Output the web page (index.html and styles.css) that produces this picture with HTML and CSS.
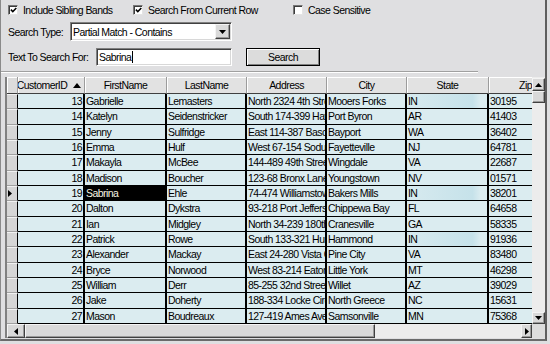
FILE: index.html
```html
<!DOCTYPE html>
<html>
<head>
<meta charset="utf-8">
<link rel="stylesheet" href="styles.css">
</head>
<body>
<div class="window">
  <div class="opts">
    <label class="chk w1"><span class="box"><svg width="8" height="8" viewBox="0 0 8 8"><path d="M1 3.6 L3.2 5.8 L7.2 1.6" fill="none" stroke="#000" stroke-width="1.7"/></svg></span>Include Sibling Bands</label>
    <label class="chk w2"><span class="box"><svg width="8" height="8" viewBox="0 0 8 8"><path d="M1 3.6 L3.2 5.8 L7.2 1.6" fill="none" stroke="#000" stroke-width="1.7"/></svg></span>Search From Current Row</label>
    <label class="chk"><span class="box"></span>Case Sensitive</label>
  </div>
  <div class="line r2">
    <span class="lbl lbl-type">Search Type:</span>
    <div class="combo"><span class="ctext">Partial Match - Contains</span><span class="ddbtn"><svg width="7" height="4" viewBox="0 0 7 4"><path d="M0 0 H7 L3.5 4 Z" fill="#000"/></svg></span></div>
  </div>
  <div class="line r3">
    <span class="lbl lbl-text">Text To Search For:</span>
    <div class="input"><span>Sabrina</span><span class="caret"></span></div>
    <button class="btn">Search</button>
  </div>
  <div class="sep"></div>
  <div class="grid">
    <div class="gtop">
      <div class="table">
        <div class="row hrow">
          <div class="hc sel"></div>
          <div class="hc idh"><span>CustomerID</span><svg class="sort" width="8" height="5" viewBox="0 0 8 5"><path d="M4 0 L8 5 H0 Z" fill="#000"/></svg></div>
          <div class="hc">FirstName</div>
          <div class="hc">LastName</div>
          <div class="hc">Address</div>
          <div class="hc">City</div>
          <div class="hc">State</div>
          <div class="hc">Zip</div>
        </div>
        <div class="row"><div class="s"></div><div class="c num">13</div><div class="c">Gabrielle</div><div class="c">Lemasters</div><div class="c">North 2324 4th Street</div><div class="c">Mooers Forks</div><div class="c hl">IN</div><div class="c">30195</div></div>
        <div class="row"><div class="s"></div><div class="c num">14</div><div class="c">Katelyn</div><div class="c">Seidenstricker</div><div class="c">South 174-399 Hayes Ave</div><div class="c">Port Byron</div><div class="c">AR</div><div class="c">41403</div></div>
        <div class="row"><div class="s"></div><div class="c num">15</div><div class="c">Jenny</div><div class="c">Sulfridge</div><div class="c">East 114-387 Bascom St</div><div class="c">Bayport</div><div class="c">WA</div><div class="c">36402</div></div>
        <div class="row"><div class="s"></div><div class="c num">16</div><div class="c">Emma</div><div class="c">Hulf</div><div class="c">West 67-154 Sodus Rd</div><div class="c">Fayetteville</div><div class="c">NJ</div><div class="c">64781</div></div>
        <div class="row"><div class="s"></div><div class="c num">17</div><div class="c">Makayla</div><div class="c">McBee</div><div class="c">144-489 49th Street</div><div class="c">Wingdale</div><div class="c">VA</div><div class="c">22687</div></div>
        <div class="row"><div class="s"></div><div class="c num">18</div><div class="c">Madison</div><div class="c">Boucher</div><div class="c">123-68 Bronx Lane</div><div class="c">Youngstown</div><div class="c">NV</div><div class="c">01571</div></div>
        <div class="row"><div class="s"><svg width="4" height="7" viewBox="0 0 4 7"><path d="M0 0 L4 3.5 L0 7 Z" fill="#000"/></svg></div><div class="c num">19</div><div class="c cur">Sabrina</div><div class="c">Ehle</div><div class="c">74-474 Williamstown Rd</div><div class="c">Bakers Mills</div><div class="c hl">IN</div><div class="c">38201</div></div>
        <div class="row"><div class="s"></div><div class="c num">20</div><div class="c">Dalton</div><div class="c">Dykstra</div><div class="c">93-218 Port Jefferson Rd</div><div class="c">Chippewa Bay</div><div class="c">FL</div><div class="c">64658</div></div>
        <div class="row"><div class="s"></div><div class="c num">21</div><div class="c">Ian</div><div class="c">Midgley</div><div class="c">North 34-239 180th St</div><div class="c">Cranesville</div><div class="c">GA</div><div class="c">58335</div></div>
        <div class="row"><div class="s"></div><div class="c num">22</div><div class="c">Patrick</div><div class="c">Rowe</div><div class="c">South 133-321 Hunt Ave</div><div class="c">Hammond</div><div class="c hl">IN</div><div class="c">91936</div></div>
        <div class="row"><div class="s"></div><div class="c num">23</div><div class="c">Alexander</div><div class="c">Mackay</div><div class="c">East 24-280 Vista Court</div><div class="c">Pine City</div><div class="c">VA</div><div class="c">83480</div></div>
        <div class="row"><div class="s"></div><div class="c num">24</div><div class="c">Bryce</div><div class="c">Norwood</div><div class="c">West 83-214 Eaton St</div><div class="c">Little York</div><div class="c">MT</div><div class="c">46298</div></div>
        <div class="row"><div class="s"></div><div class="c num">25</div><div class="c">William</div><div class="c">Derr</div><div class="c">85-255 32nd Street</div><div class="c">Willet</div><div class="c">AZ</div><div class="c">39029</div></div>
        <div class="row"><div class="s"></div><div class="c num">26</div><div class="c">Jake</div><div class="c">Doherty</div><div class="c">188-334 Locke Circle</div><div class="c">North Greece</div><div class="c">NC</div><div class="c">15631</div></div>
        <div class="row"><div class="s"></div><div class="c num">27</div><div class="c">Mason</div><div class="c">Boudreaux</div><div class="c">127-419 Ames Ave</div><div class="c">Samsonville</div><div class="c">MN</div><div class="c">75368</div></div>
      </div>
      <div class="vscroll">
        <div class="sb vup"><svg width="7" height="4" viewBox="0 0 7 4"><path d="M3.5 0 L7 4 H0 Z" fill="#000"/></svg></div>
        <div class="sb vthumb"></div>
        <div class="track"></div>
        <div class="sb vdown"><svg width="7" height="4" viewBox="0 0 7 4"><path d="M0 0 H7 L3.5 4 Z" fill="#000"/></svg></div>
      </div>
    </div>
    <div class="gbot">
      <div class="hscroll">
        <div class="sb hleft"><svg width="4" height="7" viewBox="0 0 4 7"><path d="M4 0 V7 L0 3.5 Z" fill="#000"/></svg></div>
        <div class="sb hthumb"></div>
        <div class="track"></div>
        <div class="sb hright"><svg width="4" height="7" viewBox="0 0 4 7"><path d="M0 0 L4 3.5 L0 7 Z" fill="#000"/></svg></div>
      </div>
      <div class="corner"></div>
    </div>
  </div>
</div>
</body>
</html>
```

FILE: styles.css
```css
* { box-sizing: border-box; }

body {
  margin: 0;
  background: #dfdfe1;
  font-family: "Liberation Sans Narrow", "Liberation Sans", Arial, sans-serif;
  font-size: 10.5px;
  letter-spacing: -0.55px;
  color: #000;
}

.window {
  width: 547px;
  height: 341px;
  border-left: 1px solid #8a8a8a;
  border-right: 2px solid #5e5e5e;
  border-bottom: 2px solid #6a6a6a;
  display: flex;
  flex-direction: column;
  overflow: hidden;
}

.opts {
  height: 19px;
  display: flex;
  align-items: center;
  padding-left: 7px;
}

.chk {
  display: flex;
  align-items: center;
  gap: 5px;
  white-space: nowrap;
}
.chk.w1 { width: 125px; }
.chk.w2 { width: 160px; }

.box {
  width: 10px;
  height: 10px;
  background: #fff;
  border: 1px solid;
  border-color: #777 #e4e4e4 #e4e4e4 #777;
  box-shadow: inset 1px 1px #3c3c3c;
  display: flex;
  align-items: center;
  justify-content: center;
  padding: 1px 0 0 1px;
}

.line {
  display: flex;
  align-items: center;
  padding-left: 7px;
}
.r2 { margin-top: 3px; height: 19px; }
.r3 { margin-top: 7px; height: 18px; }

.lbl { white-space: nowrap; }
.lbl-type { width: 62px; }
.lbl-text { width: 88px; }

.combo, .input {
  background: #fff;
  border: 1px solid;
  border-color: #808080 #fff #fff #808080;
  box-shadow: inset 1px 1px #404040, inset -1px -1px #d8d8d8;
  display: flex;
  align-items: center;
}

.combo {
  width: 162px;
  height: 19px;
  justify-content: space-between;
  padding-left: 2px;
}
.ctext { white-space: nowrap; }

.ddbtn {
  width: 15px;
  height: 15px;
  margin-right: 1px;
  background: #dadada;
  border: 1px solid;
  border-color: #f4f4f4 #404040 #404040 #f4f4f4;
  box-shadow: inset -1px -1px #999;
  display: flex;
  align-items: center;
  justify-content: center;
}

.input {
  width: 136px;
  height: 18px;
  padding-left: 2px;
}
.caret {
  width: 1px;
  height: 12px;
  background: #000;
  margin-left: 1px;
}

.btn {
  margin: 0 0 0 14px;
  width: 74px;
  height: 18px;
  padding: 0;
  font: inherit;
  letter-spacing: inherit;
  color: #000;
  background: #dcdcdc;
  border: 1px solid #000;
  box-shadow: inset 1px 1px #fff, inset -1px -1px #808080;
}

.sep {
  margin-top: 5px;
  width: 477px;
  height: 2px;
  border-top: 1px solid #a0a0a0;
  border-bottom: 1px solid #fff;
}

.grid {
  margin-top: 4px;
  margin-left: 4px;
  height: 261px;
  border-left: 2px solid #808080;
  display: flex;
  flex-direction: column;
}

.gtop {
  height: 247px;
  display: flex;
}

.table {
  flex: 1;
  overflow: hidden;
  background: #e6e6e6;
}

.row {
  display: grid;
  grid-template-columns: 11px 67px 82px 80px 80px 80px 82px 74px;
  height: 15.33px;
}
.hrow { height: 17px; }

.hc {
  background: #e2e2e2;
  border-right: 1px solid #9c9c9c;
  border-bottom: 1px solid #404040;
  box-shadow: inset 1px 1px #fff;
  display: flex;
  align-items: center;
  justify-content: center;
  overflow: hidden;
  white-space: nowrap;
}
.hc.sel { background: #dcdcdc; }
.idh { padding-right: 4px; }
.sort { margin-left: 6px; flex: none; }

.s {
  background: #d6d6d6;
  border-right: 1px solid #000;
  border-top: 1px solid #f2f2f2;
  border-bottom: 1px solid #a0a0a0;
  display: flex;
  align-items: center;
  padding-left: 1px;
}

.c {
  background: #dbecf0;
  border-right: 2px solid #000;
  border-bottom: 1px solid #000;
  padding: 0 1px;
  display: flex;
  align-items: center;
  overflow: hidden;
  white-space: nowrap;
}
.c.num { justify-content: flex-end; padding-right: 1px; }
.c.cur { background: #000; color: #f6f4e2; }
.c.hl { background: linear-gradient(to right, #d7eaef 0%, #c6e2ea 82%, #dbecf0 92%); }

.vscroll {
  width: 13px;
  display: flex;
  flex-direction: column;
  padding-top: 1px;
  background: #ececec;
}

.sb {
  background: #d9d9d9;
  border: 1px solid;
  border-color: #f4f4f4 #404040 #404040 #f4f4f4;
  box-shadow: inset -1px -1px #9a9a9a;
  display: flex;
  align-items: center;
  justify-content: center;
}

.track {
  flex: 1;
  background: #ececec;
}

.vup { height: 13px; }
.vthumb { height: 12px; }
.vdown { height: 12px; }

.gbot {
  height: 14px;
  display: flex;
}
.hscroll {
  flex: 1;
  display: flex;
}
.hleft { width: 18px; }
.hthumb { width: 350px; }
.hright { width: 11px; }
.corner {
  width: 13px;
  background: #dcdcdc;
}
```
